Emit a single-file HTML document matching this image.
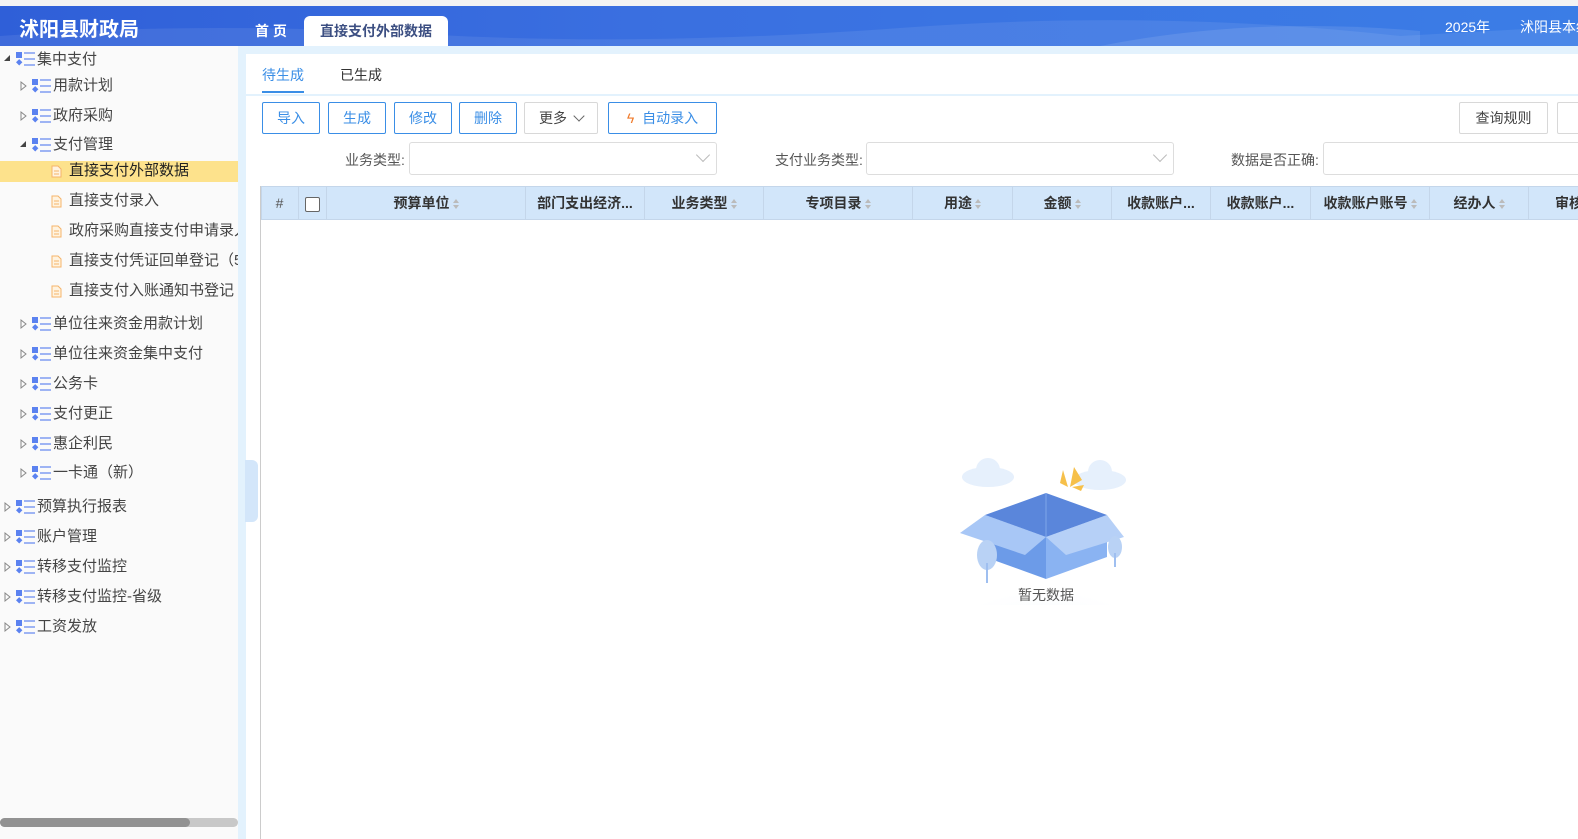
<!DOCTYPE html>
<html><head><meta charset="utf-8"><style>
*{margin:0;padding:0;box-sizing:border-box}
body{width:1578px;height:839px;overflow:hidden;background:#f3f3f3;font-family:"Liberation Sans","Noto Sans CJK SC",sans-serif;position:relative;font-size:14px;color:#333}
.abs{position:absolute}
.hdr{left:0;top:6px;width:1578px;height:40px;background:linear-gradient(90deg,#2f5fd8 0%,#3a6fe0 40%,#3b7de6 100%);overflow:hidden}
.side{left:0;top:46px;width:238px;height:793px;background:#fafafa}
.strip{left:238px;top:46px;width:1340px;height:793px;background:#e3f2fd}
.panel{left:246px;top:54px;width:1332px;height:785px;background:#fff}
.ti{position:absolute;font-size:15px;color:#444;white-space:nowrap;line-height:20px}
.btn{position:absolute;top:102px;height:32px;border:1px solid #3a8ee6;border-radius:2px;color:#3a8ee6;font-size:14px;text-align:center;line-height:30px;background:#fff}
.gbtn{border-color:#d8d8d8;color:#444}
.lbl{position:absolute;top:150px;font-size:14px;color:#555}
.sel{position:absolute;top:142px;height:33px;border:1px solid #ddd;border-radius:3px;background:#fff}
.th{position:absolute;top:187px;height:32px;line-height:32px;text-align:center;font-size:14px;font-weight:bold;color:#333;border-right:1px solid #c4d6ea}
.s{display:inline-block;width:6px;margin-left:3px;vertical-align:middle;line-height:0}
.s:before{content:"";display:block;border:3px solid transparent;border-bottom:4px solid #bbb;border-top:0;margin-bottom:2px}
.s:after{content:"";display:block;border:3px solid transparent;border-top:4px solid #bbb;border-bottom:0}
</style></head><body>
<div class="abs hdr">
<svg class="abs" style="left:0;top:0" width="1578" height="40"><path d="M0 30 Q200 15 420 28 T900 22 T1400 30 L1578 20 L1578 40 L0 40Z" fill="#fff" opacity=".08"/><path d="M1100 40 Q1250 10 1420 25 L1420 40Z" fill="#fff" opacity=".1"/></svg>
<div class="abs" style="left:19px;top:7px;font-size:20px;font-weight:bold;color:#fff">沭阳县财政局</div>
<div class="abs" style="left:255px;top:15px;font-size:14px;font-weight:bold;color:#fff">首 页</div>
<div class="abs" style="left:304px;top:10px;width:144px;height:30px;background:#fff;border-radius:6px 6px 0 0;text-align:center;line-height:30px;font-size:14px;font-weight:bold;color:#3c4f82">直接支付外部数据</div>
<div class="abs" style="left:1445px;top:11px;font-size:14px;color:#fff">2025年</div>
<div class="abs" style="left:1520px;top:11px;font-size:14px;color:#fff;white-space:nowrap">沭阳县本级</div>
</div>
<div class="abs side"></div>
<div class="abs strip"></div>
<div class="abs panel"></div>
<div class="abs" style="left:0;top:161px;width:238px;height:21px;background:#fde28c"></div>
<div class="abs" style="left:0;top:818px;width:238px;height:9px;background:#c8c8c8;border-radius:5px"></div>
<div class="abs" style="left:0;top:818px;width:190px;height:9px;background:#929292;border-radius:5px"></div>
<div class="abs" style="left:245px;top:460px;width:13px;height:62px;background:#d3e6fa;border-radius:0 6px 6px 0"></div>
<svg class="abs" style="left:0;top:0" width="240" height="640">
<defs><g id="ic"><rect x="0" y="0" width="6" height="6" fill="#5b82f0"/><rect x="1" y="8" width="4.5" height="4.5" transform="rotate(45 3.2 10.2)" fill="#5b82f0"/><g stroke="#6d8ff0" stroke-width="1.3"><line x1="8" y1="1" x2="19" y2="1"/><line x1="8" y1="7" x2="19" y2="7"/><line x1="8" y1="13" x2="19" y2="13"/></g></g>
<path id="ar" d="M0 0 L5 4 L0 8Z" fill="none" stroke="#888"/>
<path id="dn" d="M0 6 L6 6 L6 0Z" fill="#444"/>
<g id="fi"><path d="M0 0 H6 L9 3 V11 H0Z" fill="#fff3e0" stroke="#f5b46a"/><line x1="2" y1="5" x2="7" y2="5" stroke="#f5b46a"/><line x1="2" y1="8" x2="7" y2="8" stroke="#f5b46a"/></g></defs>
<use href="#dn" x="4" y="55"/><use href="#ic" x="16" y="52"/>
<use href="#ar" x="21" y="82"/><use href="#ic" x="32" y="79"/>
<use href="#ar" x="21" y="112"/><use href="#ic" x="32" y="109"/>
<use href="#dn" x="20" y="141"/><use href="#ic" x="32" y="138"/>
<use href="#fi" x="52" y="166"/><use href="#fi" x="52" y="196"/><use href="#fi" x="52" y="226"/><use href="#fi" x="52" y="256"/><use href="#fi" x="52" y="286"/>
<use href="#ar" x="21" y="320"/><use href="#ic" x="32" y="317"/>
<use href="#ar" x="21" y="350"/><use href="#ic" x="32" y="347"/>
<use href="#ar" x="21" y="380"/><use href="#ic" x="32" y="377"/>
<use href="#ar" x="21" y="410"/><use href="#ic" x="32" y="407"/>
<use href="#ar" x="21" y="440"/><use href="#ic" x="32" y="437"/>
<use href="#ar" x="21" y="469"/><use href="#ic" x="32" y="466"/>
<use href="#ar" x="5" y="503"/><use href="#ic" x="16" y="500"/>
<use href="#ar" x="5" y="533"/><use href="#ic" x="16" y="530"/>
<use href="#ar" x="5" y="563"/><use href="#ic" x="16" y="560"/>
<use href="#ar" x="5" y="593"/><use href="#ic" x="16" y="590"/>
<use href="#ar" x="5" y="623"/><use href="#ic" x="16" y="620"/>
</svg>
<div class="ti" style="left:37px;top:50px">集中支付</div>
<div class="ti" style="left:53px;top:76px">用款计划</div>
<div class="ti" style="left:53px;top:106px">政府采购</div>
<div class="ti" style="left:53px;top:135px">支付管理</div>
<div class="ti" style="left:69px;top:161px;color:#222">直接支付外部数据</div>
<div class="ti" style="left:69px;top:191px">直接支付录入</div>
<div class="ti" style="left:69px;top:221px;width:169px;overflow:hidden">政府采购直接支付申请录入</div>
<div class="ti" style="left:69px;top:251px;width:169px;overflow:hidden">直接支付凭证回单登记（5</div>
<div class="ti" style="left:69px;top:281px">直接支付入账通知书登记</div>
<div class="ti" style="left:53px;top:314px">单位往来资金用款计划</div>
<div class="ti" style="left:53px;top:344px">单位往来资金集中支付</div>
<div class="ti" style="left:53px;top:374px">公务卡</div>
<div class="ti" style="left:53px;top:404px">支付更正</div>
<div class="ti" style="left:53px;top:434px">惠企利民</div>
<div class="ti" style="left:53px;top:463px">一卡通（新）</div>
<div class="ti" style="left:37px;top:497px">预算执行报表</div>
<div class="ti" style="left:37px;top:527px">账户管理</div>
<div class="ti" style="left:37px;top:557px">转移支付监控</div>
<div class="ti" style="left:37px;top:587px">转移支付监控-省级</div>
<div class="ti" style="left:37px;top:617px">工资发放</div>

<div class="abs" style="left:262px;top:65px;font-size:14px;color:#3a8ee6">待生成</div>
<div class="abs" style="left:262px;top:91px;width:42px;height:2px;background:#3a8ee6"></div>
<div class="abs" style="left:340px;top:65px;font-size:14px;color:#333">已生成</div>
<div class="abs" style="left:246px;top:94px;width:1332px;height:2px;background:#e3f2fd"></div>

<div class="btn" style="left:262px;width:58px">导入</div>
<div class="btn" style="left:328px;width:58px">生成</div>
<div class="btn" style="left:394px;width:58px">修改</div>
<div class="btn" style="left:459px;width:58px">删除</div>
<div class="btn gbtn" style="left:524px;width:74px">更多 <span style="display:inline-block;width:8px;height:8px;border-right:1px solid #666;border-bottom:1px solid #666;transform:rotate(45deg);position:relative;top:-3px;margin-left:4px"></span></div>
<div class="btn" style="left:608px;width:109px"><span style="color:#f07a2a">ϟ</span>&nbsp; 自动录入</div>
<div class="btn gbtn" style="left:1459px;width:89px">查询规则</div>
<div class="btn gbtn" style="left:1557px;width:40px"></div>

<div class="lbl" style="left:345px">业务类型:</div>
<div class="sel" style="left:409px;width:308px"><span class="abs" style="right:8px;top:7px;width:10px;height:10px;border-right:1px solid #bbb;border-bottom:1px solid #bbb;transform:rotate(45deg)"></span></div>
<div class="lbl" style="left:775px">支付业务类型:</div>
<div class="sel" style="left:866px;width:308px"><span class="abs" style="right:8px;top:7px;width:10px;height:10px;border-right:1px solid #bbb;border-bottom:1px solid #bbb;transform:rotate(45deg)"></span></div>
<div class="lbl" style="left:1231px">数据是否正确:</div>
<div class="sel" style="left:1323px;width:280px"></div>

<div class="abs" style="left:261px;top:186px;width:1317px;height:34px;background:#d2e6fa;border:1px solid #c4d6ea;border-right:0"></div>
<div class="abs" style="left:260px;top:186px;width:1px;height:653px;background:#ccc"></div>
<div class="th" style="left:261px;width:38px;font-weight:normal;color:#555">#</div>
<div class="th" style="left:299px;width:28px"><span style="display:inline-block;width:15px;height:15px;border:1px solid #666;border-radius:2px;background:#fff;vertical-align:middle"></span></div>
<div class="th" style="left:327px;width:199px">预算单位<span class="s"></span></div>
<div class="th" style="left:526px;width:119px">部门支出经济...</div>
<div class="th" style="left:645px;width:119px">业务类型<span class="s"></span></div>
<div class="th" style="left:764px;width:149px">专项目录<span class="s"></span></div>
<div class="th" style="left:913px;width:100px">用途<span class="s"></span></div>
<div class="th" style="left:1013px;width:99px">金额<span class="s"></span></div>
<div class="th" style="left:1112px;width:99px">收款账户...</div>
<div class="th" style="left:1211px;width:100px">收款账户...</div>
<div class="th" style="left:1311px;width:119px">收款账户账号<span class="s"></span></div>
<div class="th" style="left:1430px;width:99px">经办人<span class="s"></span></div>
<div class="th" style="left:1529px;width:80px;border:0">审核</div>

<svg class="abs" style="left:940px;top:455px" width="220" height="150">
<defs><radialGradient id="hg" cx="50%" cy="100%" r="60%"><stop offset="0" stop-color="#eef4fc"/><stop offset="1" stop-color="#fff"/></radialGradient></defs>
<ellipse cx="106" cy="150" rx="105" ry="70" fill="url(#hg)"/>
<g fill="#e6f0fc"><ellipse cx="48" cy="22" rx="26" ry="10"/><circle cx="48" cy="15" r="12"/><ellipse cx="160" cy="25" rx="26" ry="10"/><circle cx="160" cy="17" r="12"/></g>
<path d="M45 60 L106 82 L106 124 L45 102Z" fill="#6c9be8"/>
<path d="M106 82 L167 60 L167 102 L106 124Z" fill="#8ab3f2"/>
<path d="M45 60 L106 38 L167 60 L106 82Z" fill="#5a86db"/>
<path d="M45 60 L106 82 L85 100 L20 78Z" fill="#a8c7f6"/>
<path d="M106 82 L167 60 L184 82 L126 100Z" fill="#b6d0f7"/>
<path d="M106 38 L106 82" stroke="#7fa6ea"/>
<g fill="#f6c04a"><path d="M123 15 L128 32 L120 28Z"/><path d="M134 12 L142 25 L130 32Z"/><path d="M132 32 L144 30 L141 36Z"/></g>
<g fill="#b9d2f5"><ellipse cx="47" cy="100" rx="10" ry="15"/><ellipse cx="175" cy="92" rx="7" ry="11"/></g>
<rect x="46" y="108" width="2" height="20" fill="#9fbff0"/><rect x="174" y="98" width="2" height="14" fill="#9fbff0"/>
</svg>
<div class="abs" style="left:1018px;top:585px;font-size:14px;color:#555">暂无数据</div>
</body></html>
